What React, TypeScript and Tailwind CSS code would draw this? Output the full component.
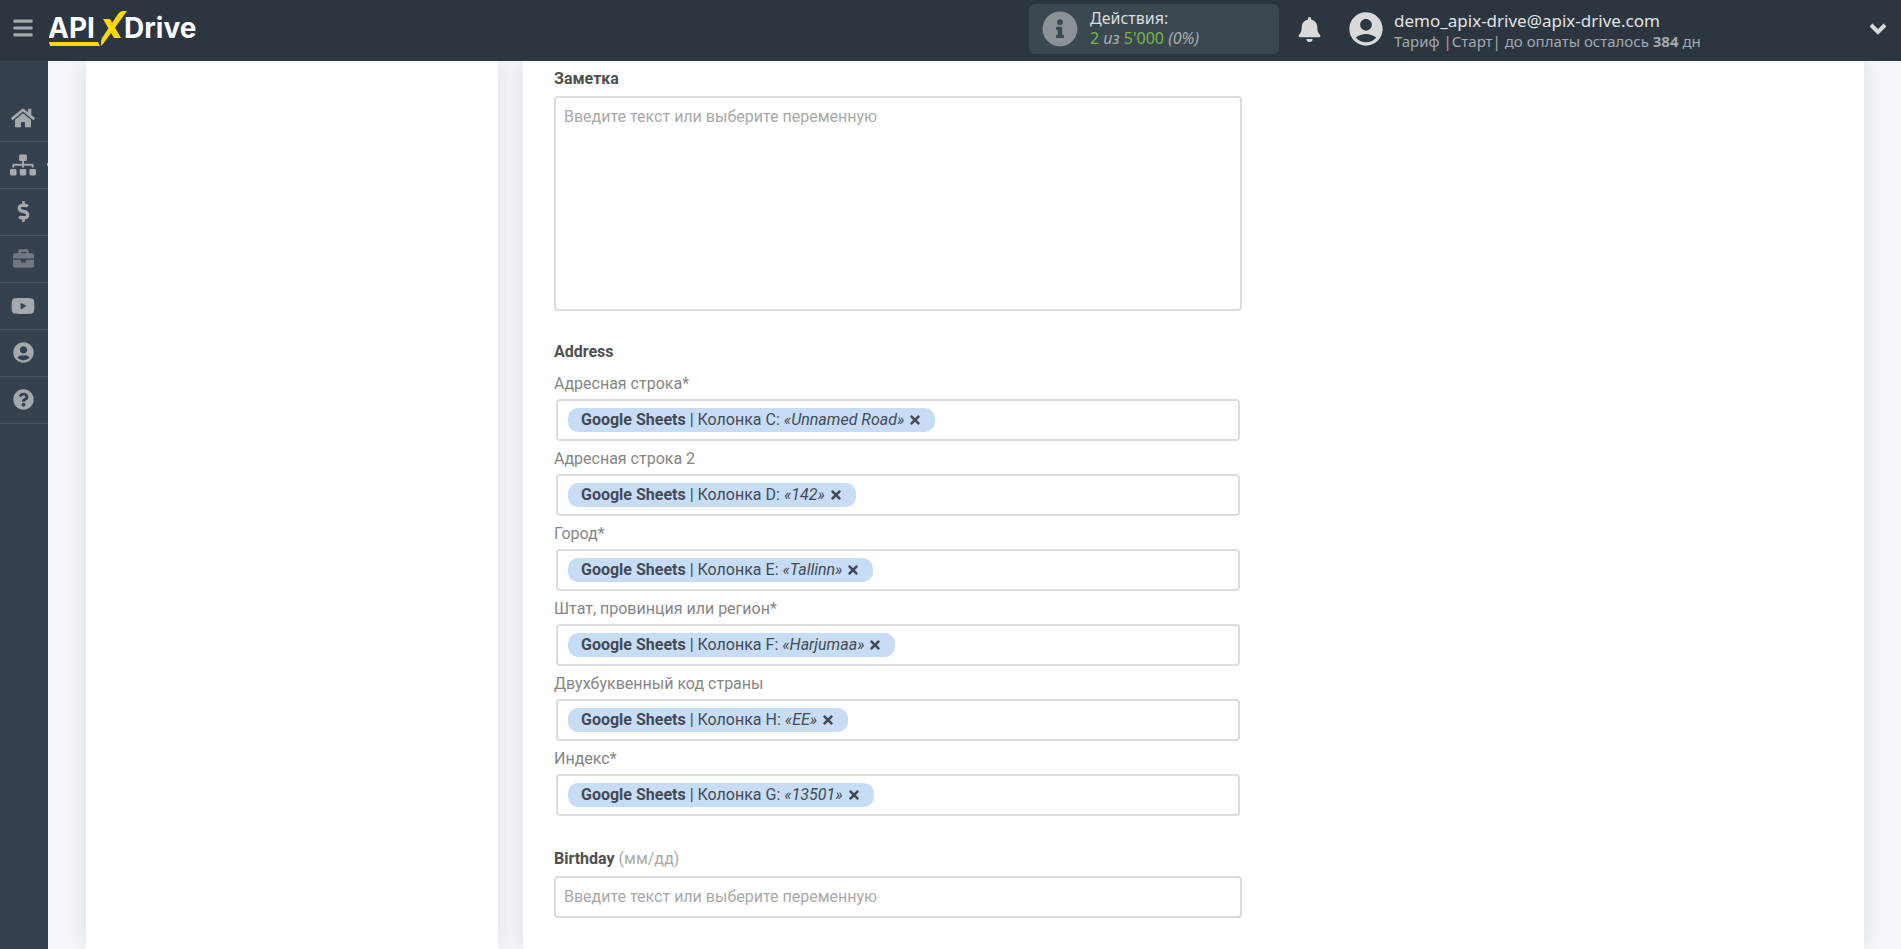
import type { ReactNode } from "react";
import {
  FaBars,
  FaBell,
  FaBriefcase,
  FaDollarSign,
  FaHome,
  FaInfoCircle,
  FaQuestionCircle,
  FaSitemap,
  FaTimes,
  FaUserCircle,
  FaYoutube,
} from "react-icons/fa";
import { MdAccountCircle } from "react-icons/md";

type AddressField = {
  id: string;
  label: string;
  column: string;
  value: string;
};

const PLACEHOLDER = "Введите текст или выберите переменную";

const addressFields: AddressField[] = [
  { id: "addr1", label: "Адресная строка*", column: "C", value: "Unnamed Road" },
  { id: "addr2", label: "Адресная строка 2", column: "D", value: "142" },
  { id: "city", label: "Город*", column: "E", value: "Tallinn" },
  { id: "state", label: "Штат, провинция или регион*", column: "F", value: "Harjumaa" },
  { id: "country", label: "Двухбуквенный код страны", column: "H", value: "EE" },
  { id: "zip", label: "Индекс*", column: "G", value: "13501" },
];

function Logo() {
  return (
    <svg width="154" height="38" viewBox="0 0 154 38" fill="#fff" fontFamily="Inter, sans-serif" fontWeight="700">
      <text x="-1" y="29" fontSize="28">API</text>
      <text x="75" y="29" fontSize="28">Drive</text>
      <path d="M78 2h-4q-3 0-5 3L53 29q-1 2-1 4v4l2-2z" fill="#ffd800" />
      <path d="M54 10h7l11 19h-7z" fill="#ffd800" />
      <path d="M0 33h49l2 4H1z" fill="#ffd800" />
    </svg>
  );
}

function SidebarItem({ label, children, submenu }: { label: string; children: ReactNode; submenu?: boolean }) {
  return (
    <li className="border-b border-[#4a545f]">
      <a href="#" aria-label={label} className="relative flex h-[46px] items-center justify-center pb-px pr-0.5 text-[#a4a9ad]">
        {children}
        {submenu ? <span className="absolute right-0 h-[3px] w-px bg-[#a4a9ad]" /> : null}
      </a>
    </li>
  );
}

function VariableField({ field }: { field: AddressField }) {
  return (
    <div>
      <label htmlFor={field.id} className="block leading-6 text-[#868686]">
        {field.label}
      </label>
      <div className="mx-0.5 mt-[3px] flex h-[42px] items-center rounded border-2 border-[#dcdcdc] px-2.5 pb-px">
        <span className="flex h-6 items-center whitespace-pre rounded-[10px] bg-[#c7ddf5] px-[13px] text-[#444a55]">
          <b>Google Sheets</b> | Колонка {field.column}: <i>«{field.value}»</i>
          <button type="button" aria-label="Удалить" className="ml-1">
            <FaTimes size={14} />
          </button>
        </span>
        <input id={field.id} className="min-w-0 flex-1 bg-transparent outline-none" />
      </div>
    </div>
  );
}

export default function App() {
  return (
    <div className="flex min-h-screen flex-col bg-[#f3f6fb] font-[Roboto,sans-serif] text-base">
      <header className="flex h-[61px] shrink-0 items-center bg-[#2b3641] font-['Noto_Sans',sans-serif]">
        <button type="button" aria-label="Меню" className="ml-3 -mt-1.5 text-[#a4a9ad]">
          <FaBars size={22} />
        </button>
        <a href="#" aria-label="ApiX-Drive" className="ml-[15px] -mt-1.5">
          <Logo />
        </a>

        <div className="ml-auto -mt-1 flex h-[50px] w-[250px] items-center rounded-md bg-[#3b4850] pl-[13px]">
          <FaInfoCircle size={36} className="text-[#8a9197]" />
          <div className="ml-3 pb-0.5">
            <p className="leading-5 text-[#dddddd]">Действия:</p>
            <p className="leading-5 text-[#a7acb0]">
              <span className="text-[#7ab648]">2</span> <i>из</i> <span className="text-[#7ab648]">5'000</span> <i>(0%)</i>
            </p>
          </div>
        </div>
        <button type="button" aria-label="Уведомления" className="ml-[18px] -mt-0.5 text-[#d9d9d9]">
          <FaBell size={25} />
        </button>
        <div className="ml-6 flex w-[523px] items-center">
          <MdAccountCircle size={40} className="-mt-1 text-[#d9d9d9]" />
          <div className="ml-2">
            <p className="text-[17px] leading-5 text-[#e3e3e3]">demo_apix-drive@apix-drive.com</p>
            <p className="text-[15px] leading-5 text-[#a4a9ad]">
              Тариф |Старт| до оплаты осталось <b>384</b> дн
            </p>
          </div>
        </div>
        <button type="button" aria-label="Открыть меню профиля" className="-mt-1 mr-[14px] text-[#d9d9d9]">
          <svg width="18" height="14" viewBox="0 0 18 14" fill="none" stroke="currentColor" strokeWidth="4">
            <path d="M2 3l7 7 7-7" />
          </svg>
        </button>
      </header>

      <div className="flex flex-1">
        <nav className="w-12 shrink-0 bg-[#36414e] pt-[34px]">
          <ul>
            <SidebarItem label="Главная">
              <FaHome size={24} />
            </SidebarItem>
            <SidebarItem label="Связи" submenu>
              <FaSitemap size={26} />
            </SidebarItem>
            <SidebarItem label="Оплата">
              <FaDollarSign size={21} />
            </SidebarItem>
            <SidebarItem label="Проекты">
              <FaBriefcase size={21} className="text-[#6f7881]" />
            </SidebarItem>
            <SidebarItem label="Видео">
              <FaYoutube size={24} />
            </SidebarItem>
            <SidebarItem label="Профиль">
              <FaUserCircle size={21} />
            </SidebarItem>
            <SidebarItem label="Помощь">
              <FaQuestionCircle size={21} />
            </SidebarItem>
          </ul>
        </nav>

        <main className="flex flex-1 gap-[25px] overflow-hidden pl-[38px] pr-[37px]">
          <aside className="w-[412px] shrink-0 bg-white shadow-[0_0_20px_rgba(0,0,0,0.1)]" />
          <section className="flex-1 bg-white px-[31px] pb-[31px] pt-1.5 shadow-[0_0_20px_rgba(0,0,0,0.1)]">
            <form className="max-w-[688px]">
              <label htmlFor="note" className="block font-bold leading-6 text-[#4f4f4f]">
                Заметка
              </label>
              <textarea
                id="note"
                placeholder={PLACEHOLDER}
                className="mt-[5px] block h-[215px] w-full resize-none rounded border-2 border-[#dcdcdc] px-2 py-[7px] leading-6 outline-none placeholder:text-[#a9a9a9]"
              />

              <fieldset className="mt-[29px]">
                <legend className="mb-2 block font-bold leading-6 text-[#4f4f4f]">Address</legend>
                <div className="flex flex-col gap-1.5">
                  {addressFields.map((field) => (
                    <VariableField key={field.id} field={field} />
                  ))}
                </div>
              </fieldset>

              <label htmlFor="birthday" className="mt-[31px] block leading-6 text-[#a9a9a9]">
                <b className="text-[#4f4f4f]">Birthday</b> (мм/дд)
              </label>
              <input
                id="birthday"
                placeholder={PLACEHOLDER}
                className="mt-[5px] block h-[42px] w-full rounded border-2 border-[#dcdcdc] px-2 pb-0.5 outline-none placeholder:text-[#a9a9a9]"
              />
            </form>
          </section>
        </main>
      </div>
    </div>
  );
}
